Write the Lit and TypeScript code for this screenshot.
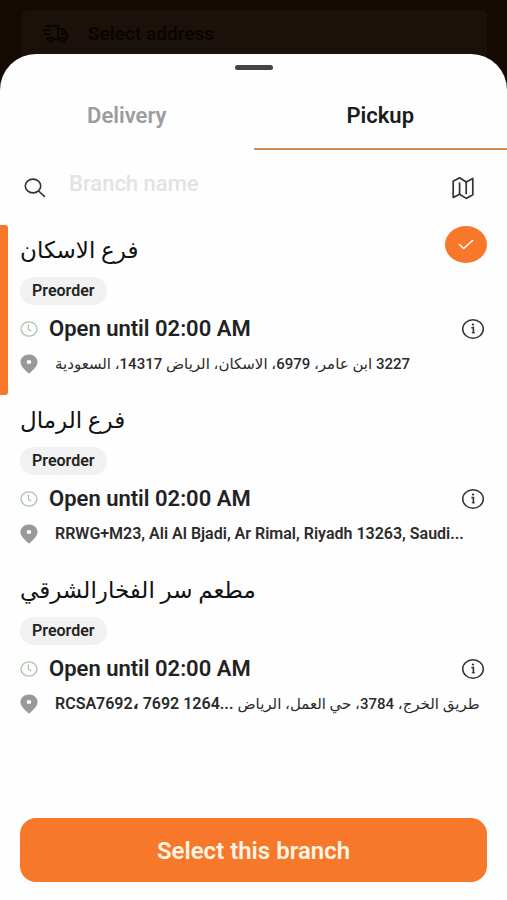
import { LitElement, html, css, svg, nothing } from "lit";
import { customElement, property, state } from "lit/decorators.js";
import { classMap } from "lit/directives/class-map.js";

interface AddressPart {
  text: string;
  dir: "ltr" | "rtl";
}

interface Branch {
  id: string;
  name: string;
  hours: string;
  address: AddressPart[];
}

const BRANCHES: Branch[] = [
  {
    id: "iskan",
    name: "فرع الاسكان",
    hours: "Open until 02:00 AM",
    address: [{ text: "3227 ابن عامر، 6979، الاسكان، الرياض 14317، السعودية", dir: "rtl" }],
  },
  {
    id: "rimal",
    name: "فرع الرمال",
    hours: "Open until 02:00 AM",
    address: [{ text: "RRWG+M23, Ali Al Bjadi, Ar Rimal, Riyadh 13263, Saudi...", dir: "ltr" }],
  },
  {
    id: "sharqi",
    name: "مطعم سر الفخارالشرقي",
    hours: "Open until 02:00 AM",
    address: [
      { text: "RCSA7692، 7692 1264...", dir: "ltr" },
      { text: "طريق الخرج، 3784، حي العمل، الرياض", dir: "rtl" },
    ],
  },
];

const truckIcon = svg`<svg width="28" height="20" viewBox="0 0 28 20" fill="none" stroke="currentColor" stroke-width="2" aria-hidden="true">
  <path d="M3 2h13v13h-5M16 5h5l4 5v5h-2M18 15h-2M1 6h7M2 10h6M4 15h2M20 6v4h5"/>
  <circle cx="8.500" cy="15.500" r="2.300"/><circle cx="20.500" cy="15.500" r="2.300"/></svg>`;

const searchIcon = svg`<svg width="22" height="20" viewBox="0 0 22 20" fill="none" stroke="currentColor" stroke-width="1.600" stroke-linecap="round" aria-hidden="true">
  <ellipse cx="9" cy="8" rx="7.700" ry="6.900"/><path d="M14.600 13l5.800 5.400"/></svg>`;

const mapIcon = svg`<svg width="22" height="24" viewBox="0 0 22 24" fill="none" stroke="currentColor" stroke-width="1.700" stroke-linejoin="round" stroke-linecap="round" aria-hidden="true">
  <path d="M1.200 5.200L7.600 1.800l6.600 4.200 6.600-3.600v16.400l-6.600 3.600-6.600-4.200-6.400 3.200z"/><path d="M7.600 7v11M14.200 6.500v11"/></svg>`;

const checkIcon = svg`<svg width="16" height="11" viewBox="0 0 16 11" fill="none" stroke="currentColor" stroke-width="1.600" stroke-linecap="round" stroke-linejoin="round" aria-hidden="true">
  <path d="M1.500 5.500l4.200 4L14.500 1.500"/></svg>`;

const clockIcon = svg`<svg width="18" height="16" viewBox="0 0 18 16" fill="none" stroke="currentColor" stroke-width="1.300" stroke-linecap="round" aria-hidden="true">
  <ellipse cx="9" cy="8" rx="8" ry="7.200"/><path d="M8.400 4v4.300l2.400 1.500"/></svg>`;

const pinIcon = svg`<svg width="18" height="20" viewBox="0 0 18 20" aria-hidden="true">
  <path fill="currentColor" fill-rule="evenodd" d="M9 .4C4.200.4.500 3.700.500 8c0 4.900 5.400 8.700 8.500 11.800C12.100 16.700 17.500 12.900 17.500 8 17.500 3.700 13.800.4 9 .4zM9 5.900a2.300 2 0 1 1 0 4 2.300 2 0 0 1 0-4z"/></svg>`;

const infoIcon = svg`<svg width="24" height="22" viewBox="0 0 24 22" fill="none" stroke="currentColor" aria-hidden="true">
  <ellipse cx="12" cy="11" rx="10.300" ry="9.200" stroke-width="1.500"/>
  <path d="M10.400 9.600h2V15" stroke-width="1.600"/><path d="M10.800 14.800h3" stroke-width="1.200"/><ellipse cx="12" cy="6.600" rx="1.200" ry="1" fill="currentColor" stroke="none"/></svg>`;

@customElement("branch-card")
export class BranchCard extends LitElement {
  @property({ attribute: false }) branch!: Branch;
  @property({ type: Boolean }) selected = false;

  static styles = css`
    :host {
      display: block;
    }
    .card {
      display: grid;
      grid-template-columns: 8px 1fr;
    }
    .accent {
      border-radius: 0 3px 3px 0;
    }
    .selected .accent {
      background: #f7782a;
    }
    .content {
      padding: 0 20px 18px 12px;
      min-width: 0;
    }
    .title {
      display: flex;
      justify-content: space-between;
      height: 44px;
      cursor: pointer;
    }
    .name {
      align-self: flex-end;
      font-size: 23px;
      line-height: 36px;
      font-weight: 400;
      color: #111;
    }
    .pick {
      display: grid;
      place-items: center;
      width: 42px;
      height: 37px;
      margin-top: 1px;
      border-radius: 50%;
      color: #fff;
    }
    .selected .pick {
      background: #f7782a;
    }
    .pick > * {
      grid-area: 1 / 1;
    }
    .radio {
      opacity: 0;
      margin: 0;
    }
    .chip {
      display: inline-block;
      margin: 8px 0 10px;
      padding: 0 12px;
      border-radius: 14px;
      background: #f1f1f1;
      font-size: 16px;
      line-height: 28px;
      font-weight: 600;
      vertical-align: top;
    }
    .hours {
      display: grid;
      grid-template-columns: 18px 1fr 28px;
      column-gap: 11px;
      align-items: center;
      font-size: 22px;
      line-height: 28px;
      font-weight: 600;
    }
    .clock {
      display: flex;
      color: #a9c5ad;
    }
    .info {
      display: flex;
      justify-content: center;
      border: 0;
      padding: 0;
      background: none;
      color: #333;
    }
    .place {
      display: grid;
      grid-template-columns: 18px 1fr;
      column-gap: 17px;
      align-items: center;
      margin-top: 8px;
      font-size: 16px;
      line-height: 26px;
      font-weight: 600;
      color: #2b2b2b;
    }
    .pin {
      display: flex;
      color: #999;
    }
    .address {
      white-space: nowrap;
    }
    .arabic {
      font-size: 15px;
      font-weight: 500;
    }
  `;

  private pick() {
    this.dispatchEvent(new CustomEvent("pick", { detail: this.branch.id }));
  }

  render() {
    const b = this.branch;
    return html`
      <article class=${classMap({ card: true, selected: this.selected })}>
        <span class="accent"></span>
        <div class="content">
          <label class="title">
            <span class="name" dir="rtl" lang="ar">${b.name}</span>
            <span class="pick">
              <input class="radio" type="radio" name="branch" .checked=${this.selected} @change=${this.pick} />
              ${this.selected ? checkIcon : nothing}
            </span>
          </label>
          <span class="chip">Preorder</span>
          <div class="hours">
            <span class="clock">${clockIcon}</span>
            <span>${b.hours}</span>
            <button class="info" type="button" aria-label="Branch details">${infoIcon}</button>
          </div>
          <div class="place">
            <span class="pin">${pinIcon}</span>
            <span class="address">${b.address.map(
              (p, i) => html`${i ? " " : ""}<bdi class=${classMap({ arabic: p.dir === "rtl" })} dir=${p.dir}>${p.text}</bdi>`
            )}</span>
          </div>
        </div>
      </article>
    `;
  }
}

@customElement("app-root")
export class AppRoot extends LitElement {
  @state() private tab = "Pickup";
  @state() private selectedId = "iskan";

  static styles = css`
    :host {
      display: flex;
      flex-direction: column;
      min-height: 100vh;
      background: #150904;
      color: #222;
      font-family: Roboto, "DejaVu Sans", sans-serif;
    }
    .backdrop {
      padding: 10px 20px 0 22px;
    }
    .address-bar {
      display: flex;
      align-items: center;
      gap: 18px;
      width: 100%;
      height: 64px;
      padding: 0 20px 16px;
      border: 0;
      border-radius: 6px;
      background: #1a110b;
      color: #0a0503;
      font: inherit;
      font-size: 19px;
      line-height: 24px;
      font-weight: 600;
    }
    .sheet {
      flex: 1;
      display: flex;
      flex-direction: column;
      margin-top: -20px;
      border-radius: 36px 36px 0 0;
      background: #fefefe;
      position: relative;
    }
    .handle {
      width: 38px;
      height: 5px;
      margin: 11px auto 0;
      border-radius: 3px;
      background: #444;
    }
    .tabs {
      display: grid;
      grid-template-columns: 1fr 1fr;
      margin-top: 14px;
    }
    .tab {
      height: 66px;
      padding: 0;
      border: 0;
      border-bottom: 2px solid transparent;
      background: none;
      font: inherit;
      font-size: 22px;
      line-height: 24px;
      font-weight: 600;
      color: #9c9c9c;
    }
    .tab.active {
      color: #1c1c1c;
      border-color: #d88a55;
    }
    .search {
      display: grid;
      grid-template-columns: 22px 1fr 22px;
      column-gap: 23px;
      align-items: center;
      height: 75px;
      padding: 0 33px 0 24px;
      color: #333;
    }
    .search-icon {
      display: flex;
    }
    .field {
      min-width: 0;
      padding: 0 0 8px;
      border: 0;
      outline: 0;
      background: none;
      font: inherit;
      font-size: 22px;
      line-height: 24px;
      font-weight: 500;
      color: #222;
    }
    .field::placeholder {
      color: #e3e3e3;
      opacity: 1;
    }
    .map {
      display: flex;
      border: 0;
      padding: 0;
      background: none;
      color: #333;
    }
    .list {
      flex: 1;
    }
    .footer {
      padding: 12px 20px 18px;
    }
    .submit {
      width: 100%;
      height: 64px;
      padding: 2px 0 0;
      border: 0;
      border-radius: 16px;
      background: #f7782a;
      color: #fff5e4;
      font: inherit;
      font-size: 24px;
      line-height: 28px;
      font-weight: 600;
    }
  `;

  render() {
    return html`
      <header class="backdrop">
        <button class="address-bar" type="button">${truckIcon}<span>Select address</span></button>
      </header>
      <main class="sheet">
        <div class="handle"></div>
        <div class="tabs" role="tablist">
          ${["Delivery", "Pickup"].map(
            (t) => html`<button
              type="button"
              role="tab"
              aria-selected=${t === this.tab}
              class=${classMap({ tab: true, active: t === this.tab })}
              @click=${() => (this.tab = t)}
            >${t}</button>`
          )}
        </div>
        <div class="search">
          <label class="search-icon" for="branch-name">${searchIcon}</label>
          <input class="field" id="branch-name" type="text" placeholder="Branch name" aria-label="Branch name" />
          <button class="map" type="button" aria-label="Show map">${mapIcon}</button>
        </div>
        <section class="list">
          ${BRANCHES.map(
            (b) => html`<branch-card
              .branch=${b}
              ?selected=${b.id === this.selectedId}
              @pick=${() => (this.selectedId = b.id)}
            ></branch-card>`
          )}
        </section>
        <footer class="footer">
          <button class="submit" type="button">Select this branch</button>
        </footer>
      </main>
    `;
  }
}
